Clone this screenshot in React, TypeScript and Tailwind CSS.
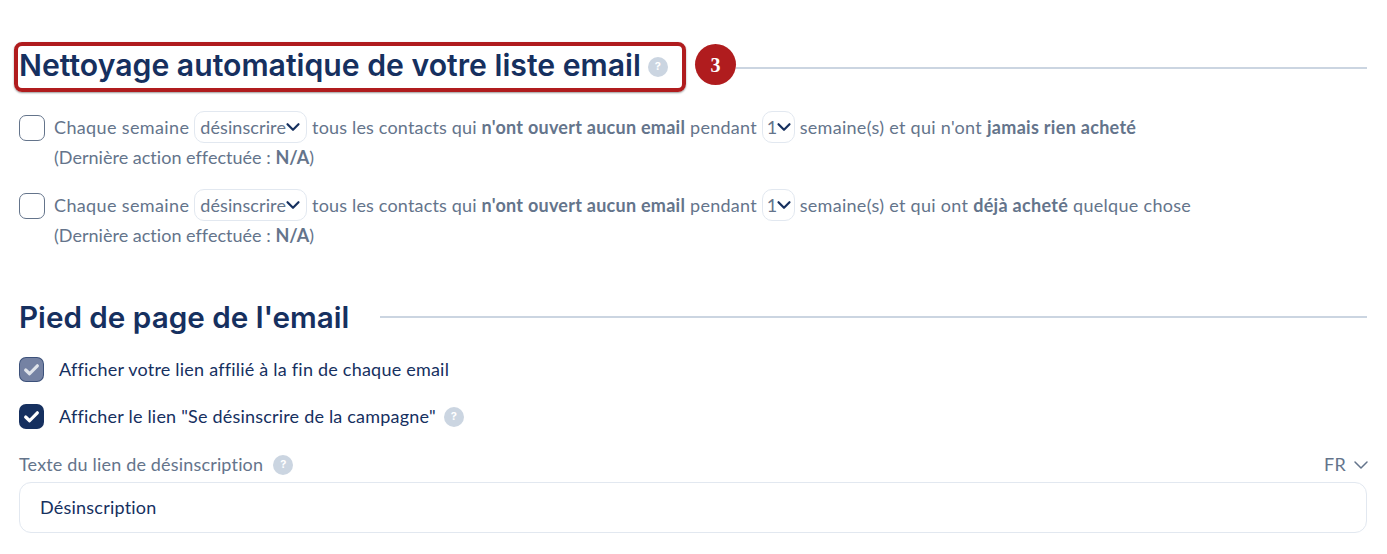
import { ChevronDown } from "lucide-react";

const body = "font-['Lato','Noto_Sans',sans-serif] text-[18px] tracking-[0.22px]";

function Help() {
  return (
    <span className="w-5 h-5 text-[11px] tracking-normal inline-flex items-center justify-center rounded-full bg-[#cbd5e1] font-bold text-white shrink-0 font-['Inter',sans-serif]">
      ?
    </span>
  );
}

function Dropdown({ label, wide }: { label: string; wide?: boolean }) {
  return (
    <span className={`inline-flex items-center h-[32px] -mt-[4px] rounded-[10px] border border-[#e2e8f0] align-middle tracking-[0.1px] ${wide ? "w-[113px] pl-[5px]" : "w-[33px] pl-[4px]"}`}>
      <span>{label}</span>
      <ChevronDown className="w-[22px] h-[22px] -mx-[4px] text-[#16305f] shrink-0" strokeWidth={2.4} />
    </span>
  );
}

function CleanupRow({ lines }: { lines: React.ReactNode }) {
  return (
    <div className="flex items-start">
      <span className="mt-[3px] w-[26px] h-[26px] rounded-[7px] border border-[#64748b] bg-white shrink-0" />
      <div className="ml-[9px] leading-[30px] text-[#64748b] whitespace-nowrap tracking-[0.26px]">
        <div className="h-[30px]">{lines}</div>
        <div className="tracking-[0.02px]">(Dernière action effectuée : <b>N/A</b>)</div>
      </div>
    </div>
  );
}

function Check({ muted }: { muted?: boolean }) {
  return (
    <span className={`w-[25px] h-[25px] rounded-[7px] flex items-center justify-center shrink-0 ${muted ? "bg-[#7582a3] border border-[#16305f]/60" : "bg-[#16305f]"}`}>
      <svg viewBox="0 0 16 16" className={`w-[17px] h-[17px] ${muted ? "text-[#dfe3ea]" : "text-white"}`} fill="none" stroke="currentColor" strokeWidth={3} strokeLinecap="round" strokeLinejoin="round">
        <path d="M2.5 8.5 6.2 12 13.5 4.5" />
      </svg>
    </span>
  );
}

export default function App() {
  return (
    <div className={`${body} min-h-[554px] bg-white pl-[19px] pr-[20px] pt-[42px] overflow-hidden`}>
      {/* Nettoyage automatique */}
      <div className="flex items-start">
        <div className="-ml-[5px] h-[50px] w-[672px] rounded-[8px] border-[4px] border-[#b01c1e] shadow-[0_1px_2px_rgba(0,0,0,0.4)] flex items-center pl-[1px] pb-[2px]">
          <h2 className="text-[30.2px] tracking-normal font-semibold text-[#16305f] font-['Inter',sans-serif] whitespace-nowrap">
            Nettoyage automatique de votre liste email
          </h2>
          <span className="ml-[7px] mt-[1px] flex"><Help /></span>
        </div>
        <span className="ml-[9px] mt-[2px] w-[41px] h-[41px] rounded-full bg-[#b01c1e] text-white flex items-center justify-center text-[20px] font-bold tracking-normal font-['Liberation_Serif',serif]">
          3
        </span>
        <div className="flex-1 mt-[25px] h-[2px] bg-[#cbd5e1]" />
      </div>

      <div className="mt-[20px] flex flex-col gap-[18px]">
        <CleanupRow
          lines={
            <>
              <span className="tracking-[0.37px]">Chaque semaine</span> <Dropdown label="désinscrire" wide /> <span className="tracking-[0.17px]">tous les contacts qui</span> <b>n'ont ouvert aucun email</b> pendant <Dropdown label="1" /> <span className="tracking-[0.3px]">semaine(s) et qui n'ont <b>jamais rien acheté</b></span>
            </>
          }
        />
        <CleanupRow
          lines={
            <>
              <span className="tracking-[0.37px]">Chaque semaine</span> <Dropdown label="désinscrire" wide /> <span className="tracking-[0.17px]">tous les contacts qui</span> <b>n'ont ouvert aucun email</b> pendant <Dropdown label="1" /> <span className="tracking-[0.3px]">semaine(s) et qui ont <b>déjà acheté</b> quelque chose</span>
            </>
          }
        />
      </div>

      {/* Pied de page */}
      <div className="mt-[45px] flex items-center">
        <h2 className="text-[29.65px] tracking-normal leading-[44px] font-semibold text-[#16305f] font-['Inter',sans-serif] whitespace-nowrap">
          Pied de page de l'email
        </h2>
        <div className="flex-1 ml-[31px] h-[2px] bg-[#cbd5e1]" />
      </div>

      <div className="mt-[18px] flex items-center gap-[15px] leading-[25px] text-[#16305f]">
        <Check muted />
        <span>Afficher votre lien affilié à la fin de chaque email</span>
      </div>
      <div className="mt-[22px] flex items-center gap-[15px] leading-[25px] text-[#16305f]">
        <Check />
        <span className="tracking-[0.2px]">Afficher le lien "Se désinscrire de la campagne"</span>
        <span className="-ml-[7px] flex"><Help /></span>
      </div>

      <div className="mt-[23px] flex items-center justify-between leading-[25px] text-[#64748b]">
        <div className="flex items-center gap-[10px] tracking-[0.17px]">
          <span>Texte du lien de désinscription</span>
          <Help />
        </div>
        <div className="flex items-center">
          <span>FR</span>
          <ChevronDown className="w-[24px] h-[24px] -mr-[6px] ml-[3px]" strokeWidth={1.5} />
        </div>
      </div>
      <div className="mt-[5px] h-[51px] rounded-[12px] border border-[#e2e8f0] flex items-center pl-[20px] text-[#16305f]">
        Désinscription
      </div>
    </div>
  );
}
